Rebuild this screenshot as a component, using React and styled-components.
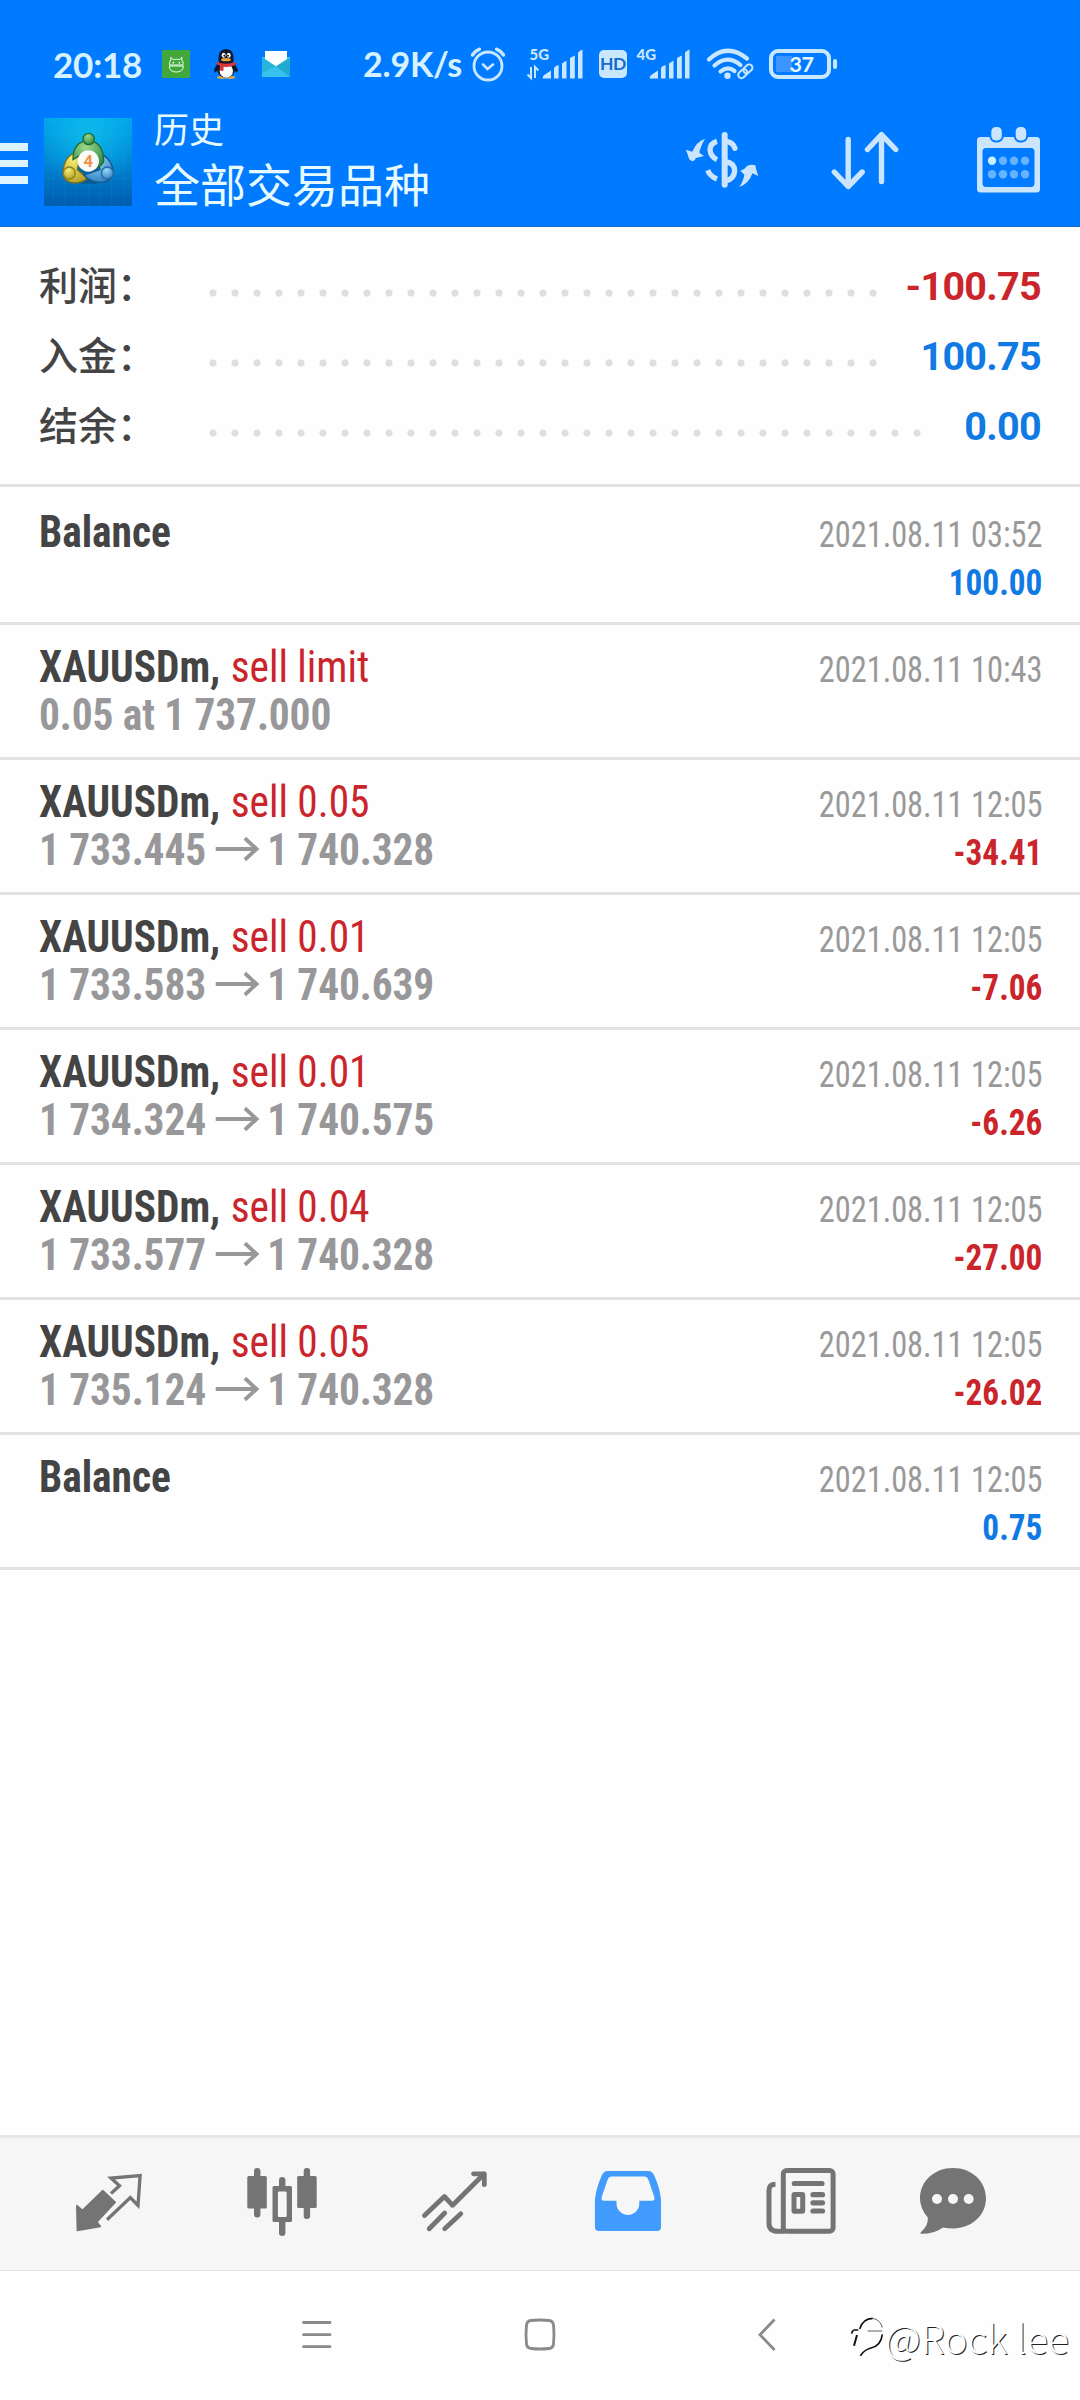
import React from 'react';
import styled, { createGlobalStyle } from 'styled-components';

const GlobalStyle = createGlobalStyle`
  * {
    box-sizing: border-box;
  }

  body {
    margin: 0;
    background: #fff;
    font-family: Roboto, 'Noto Sans CJK SC', sans-serif;
  }

  svg {
    display: block;
    flex: none;
    overflow: visible;
  }
`;

const COLORS = {
  red: '#c9252b',
  blue: '#0f79e4',
  text: '#444',
  gray: '#98989a',
  line: '#e3e3e3',
  icon: '#747474',
  light: '#c9e8ff',
};

const Screen = styled.div`
  position: relative;
  display: flex;
  flex-direction: column;
  width: 1080px;
  height: 2400px;
  overflow: hidden;
  background: #fefefe;
`;

const Header = styled.header`
  height: 227px;
  background: #007aff;
  border-bottom: 1px solid #1569c4;
`;

const StatusBar = styled.div`
  display: flex;
  align-items: center;
  height: 88px;
  padding: 40px 0 0 53px;
  color: #d6f1ff;
`;

const Clock = styled.div`
  width: 109px;
  font: 700 35px/44px Lato, sans-serif;
  letter-spacing: -0.2px;
  white-space: nowrap;
`;

const NotiIcons = styled.div`
  display: flex;
  align-items: center;
  gap: 24px;
  width: 201px;
`;

const Speed = styled.div`
  width: 107px;
  font: 700 34px/44px Lato, sans-serif;
  letter-spacing: -0.2px;
  white-space: nowrap;
`;

const SystemIcons = styled.div`
  display: flex;
  align-items: center;
`;

const SpacedSignal = styled.div`
  margin-left: 20px;
`;

const ShiftedSignal = styled.div`
  margin-right: 15px;
`;

const Toolbar = styled.div`
  display: flex;
  align-items: flex-start;
  height: 138px;
  padding-top: 12px;
`;

const MenuButton = styled.div`
  display: flex;
  flex-direction: column;
  gap: 9px;
  width: 44px;
  padding-top: 43px;
`;

const MenuBar = styled.span`
  width: 28px;
  height: 7.5px;
  background: #dcf4ff;
`;

const AppLogo = styled.div`
  width: 88px;
  padding-top: 18px;
`;

const Titles = styled.div`
  display: flex;
  flex-direction: column;
  flex: 1;
  padding-left: 22px;
  color: #e6faff;
  font-family: 'Noto Sans CJK SC', sans-serif;
  font-weight: 400;
`;

const SubTitle = styled.div`
  font-size: 35px;
  line-height: 56px;
`;

const Title = styled.div`
  font-size: 46px;
  line-height: 52px;
`;

const Actions = styled.div`
  display: flex;
  align-items: flex-start;
  padding: 24px 38px 0 0;
`;

const ActionSlot = styled.div`
  margin-right: ${({ $gap }) => $gap}px;
  padding-top: ${({ $top }) => $top}px;
`;

const Summary = styled.section`
  display: flex;
  flex-direction: column;
  height: 260px;
  padding: 24px 39px 0 39px;
  border-bottom: 3px solid ${COLORS.line};
`;

const SummaryRow = styled.div`
  display: flex;
  align-items: flex-start;
  height: 70px;
`;

const SummaryLabel = styled.div`
  width: 163px;
  font: 500 39px/64px 'Noto Sans CJK SC', sans-serif;
  color: ${COLORS.text};
`;

const Leader = styled.div`
  width: ${({ $dots }) => $dots * 22}px;
  height: 8px;
  margin-top: 38px;
  background: radial-gradient(circle at 11px 4px, #dfdfdf 3.3px, transparent 3.9px) 0 0 / 22px 8px repeat-x;
`;

const SummaryValue = styled.div`
  flex: 1;
  text-align: right;
  font-size: 39.5px;
  line-height: 71px;
  letter-spacing: -0.7px;
  font-weight: 700;
  color: ${({ $negative }) => ($negative ? COLORS.red : COLORS.blue)};
`;

const List = styled.div`
  flex: 1;
`;

const Row = styled.div`
  display: flex;
  justify-content: space-between;
  height: ${({ $first }) => ($first ? 138 : 135)}px;
  padding: ${({ $first }) => ($first ? 21 : 18)}px 38px 0 39px;
  border-bottom: 3px solid ${COLORS.line};
  font-family: 'Roboto Condensed', Roboto, sans-serif;
`;

const Deal = styled.div`
  font-size: 44px;
  line-height: 48px;
  font-weight: 700;
  white-space: pre;
  transform: scaleX(0.94);
  transform-origin: left;
`;

const Symbol = styled.div`
  color: ${COLORS.text};
`;

const Action = styled.span`
  margin-left: 1px;
  color: ${COLORS.red};
  font-weight: 400;
`;

const Prices = styled.div`
  display: flex;
  align-items: center;
  color: ${COLORS.gray};
  letter-spacing: -0.1px;
`;

const SpacedArrow = styled.span`
  display: flex;
  margin: -3px 9px 0 10px;
`;

const Result = styled.div`
  padding-top: 3px;
  font-size: 36.5px;
  line-height: 48px;
  text-align: right;
`;

const Time = styled.div`
  color: #999;
  transform: scaleX(0.886);
  transform-origin: right;
`;

const Amount = styled.div`
  font-weight: 700;
  color: ${({ $negative }) => ($negative ? COLORS.red : COLORS.blue)};
  transform: scaleX(0.91);
  transform-origin: right;
`;

const TabBar = styled.nav`
  display: flex;
  height: 136px;
  padding-left: 22px;
  background: #f6f6f6;
  border-top: 3px solid #e6e6e6;
  border-bottom: 1px solid #e0e0e0;
`;

const Tab = styled.div`
  display: flex;
  justify-content: center;
  width: ${({ $last }) => ($last ? 131 : 173)}px;
  padding-top: 24px;
  color: ${({ $active }) => ($active ? '#429bff' : COLORS.icon)};
`;

const NavBar = styled.div`
  display: flex;
  align-items: flex-start;
  justify-content: center;
  gap: 193px;
  height: 129px;
  padding-top: 46px;
  color: #8a8a8a;
`;

const Watermark = styled.div`
  position: absolute;
  right: 11px;
  bottom: 36px;
  display: flex;
  align-items: center;
  color: #fff;
  font: 300 39.3px/54px 'Noto Sans CJK SC', sans-serif;
  text-shadow: 1px 1px 0 #222;
  white-space: pre;
`;

/* ---------- 状态栏图标 ---------- */

const AndroidIcon = () => (
  <svg width="28" height="28" viewBox="0 0 84 84">
    <rect width="84" height="84" rx="4" fill="#43a83c" />
    <g fill="none" stroke="#e8ffe8" strokeWidth="3">
      <path d="M23 45 Q21 34 27 30 L26 22 L34 29 Q43 26 52 29 L60 22 L59 30 Q65 34 63 45Z" />
      <path d="M22 48 H64 Q64 66 43 66 Q22 66 22 48Z" />
    </g>
    <circle cx="34" cy="38" r="2.5" fill="#fff" />
    <circle cx="52" cy="38" r="2.5" fill="#fff" />
  </svg>
);

const PenguinIcon = () => (
  <svg width="24" height="30" viewBox="0 0 72 90">
    <ellipse cx="24" cy="85" rx="15" ry="5" fill="#d8a84a" />
    <ellipse cx="49" cy="85" rx="15" ry="5" fill="#d8a84a" />
    <path d="M12 40 L0 62 L3 71 L14 62Z M60 40 L72 62 L69 71 L58 62Z" fill="#10182a" />
    <ellipse cx="36" cy="58" rx="27" ry="29" fill="#10182a" />
    <path d="M13 34 Q12 0 36 0 Q60 0 59 34 Q59 45 36 45 Q13 45 13 34Z" fill="#10182a" />
    <ellipse cx="37" cy="66" rx="20" ry="20" fill="#fff" />
    <ellipse cx="29" cy="19" rx="6" ry="8" fill="#fff" />
    <ellipse cx="44" cy="19" rx="6" ry="8" fill="#fff" />
    <circle cx="31" cy="20" r="3" fill="#111" />
    <circle cx="42" cy="20" r="3" fill="#111" />
    <ellipse cx="36" cy="32" rx="15" ry="5" fill="#e8a33a" />
    <path d="M8 38 Q36 50 64 38 L65 48 Q45 56 29 53 L28 67 L17 64 L18 50 L8 46Z" fill="#d8363c" />
  </svg>
);

const MailIcon = () => (
  <svg width="28" height="27" viewBox="0 0 84 81">
    <path d="M0 18 H84 V78 H0Z" fill="#35c3ee" />
    <path d="M84 22 L42 46 L84 78Z" fill="#21a9cf" />
    <path d="M0 18 L42 46 L0 66Z" fill="#27b4dc" />
    <path d="M9 0 H75 V24 L42 46 L9 24Z" fill="#fff" />
  </svg>
);

const AlarmIcon = () => (
  <svg width="36" height="36" viewBox="0 0 36 36" fill="none" stroke={COLORS.light} strokeLinecap="round">
    <circle cx="18" cy="20" r="14" strokeWidth="2.8" />
    <path d="M13 18.5 L17.5 23 L23 18.5" strokeWidth="2.6" />
    <path d="M2.5 9 Q5 5 9.5 3.2 M33.5 9 Q31 5 26.5 3.2" strokeWidth="3.4" />
  </svg>
);

const NetLabel = styled.text`
  font: 900 15px Lato, sans-serif;
  fill: ${COLORS.light};
`;

const SignalIcon = ({ label, data }) => (
  <svg width="58" height="40" viewBox="0 -3 58 40" fill={COLORS.light}>
    <NetLabel x="3.5" y="12.5">
      {label}
    </NetLabel>
    {data && (
      <path
        d="M5 20 V31 L1.5 27.5 M9 31 V20 L12.5 23.5"
        fill="none"
        stroke={COLORS.light}
        strokeWidth="2"
      />
    )}
    <path d="M17 31.5 Q16 29.5 19 27.5 L25 23.5 V31.5Z" />
    <path d="M28 31.5 V21.5 Q28 20 30 19 L32.6 18 V31.5Z" />
    <path d="M36 31.5 V16.5 L40.5 13.5 V31.5Z" />
    <path d="M44 31.5 V11 L48.8 8.5 V31.5Z" />
    <path d="M52 31.5 V6 Q52 4.5 56.5 2.5 V31.5Z" />
  </svg>
);

const HdBadge = styled.div`
  width: 28px;
  height: 28px;
  margin: 0 6px 0 15px;
  border-radius: 5px;
  background: ${COLORS.light};
  color: #1769cc;
  font: 700 17.5px/28px Lato, sans-serif;
  letter-spacing: -0.5px;
  text-align: center;
`;

const WifiIcon = () => (
  <svg width="48" height="34" viewBox="0 0 48 34" fill="none" stroke={COLORS.light}>
    <g strokeWidth="4.2" strokeLinecap="round">
      <path d="M3 12.5 Q21 -4.5 41 11.5" />
      <path d="M8.5 18.5 Q21.5 7 34.5 18" />
      <path d="M14.5 24.5 Q21.5 18.5 28.5 24" />
    </g>
    <circle cx="21.5" cy="28.7" r="3.2" fill={COLORS.light} stroke="none" />
    <g strokeWidth="2" transform="rotate(-43 39.5 24.5)">
      <rect x="31" y="21" width="10" height="6.5" rx="3.2" />
      <rect x="38" y="21" width="10" height="6.5" rx="3.2" />
    </g>
  </svg>
);

const Battery = styled.div`
  display: flex;
  align-items: center;
  margin-left: 15px;
`;

const BatteryBody = styled.div`
  width: 62px;
  height: 30px;
  border: 4px solid ${COLORS.light};
  border-radius: 9px;
  background: linear-gradient(#3b94ff, #3b94ff) 3px 3px / 16px 16px no-repeat;
  color: #e6f6ff;
  font: 700 21.5px/22px Lato, sans-serif;
  letter-spacing: -0.5px;
  padding-left: 3px;
  text-align: center;
`;

const BatteryTip = styled.div`
  width: 4px;
  height: 10px;
  margin-left: 2px;
  border-radius: 2px;
  background: ${COLORS.light};
`;

/* ---------- 标题栏图标 ---------- */

const LogoDigit = styled.text`
  font: 700 50px Roboto, sans-serif;
  fill: #f0924c;
  text-anchor: middle;
`;

const LogoIcon = () => (
  <svg width="88" height="88" viewBox="12 233 264 264">
    <defs>
      <linearGradient id="tile" x1="0" y1="0" x2="0" y2="1">
        <stop offset="0" stopColor="#00a4ea" />
        <stop offset="0.55" stopColor="#0080cf" />
        <stop offset="1" stopColor="#005cae" />
      </linearGradient>
      <radialGradient id="glow" cx="0.5" cy="0.2" r="0.6">
        <stop offset="0" stopColor="#12c8ee" stopOpacity="0.7" />
        <stop offset="1" stopColor="#12c8ee" stopOpacity="0" />
      </radialGradient>
      <radialGradient id="green" cx="0.4" cy="0.25" r="0.9">
        <stop offset="0" stopColor="#9bd888" />
        <stop offset="1" stopColor="#1f8040" />
      </radialGradient>
      <radialGradient id="yellow" cx="0.4" cy="0.25" r="0.9">
        <stop offset="0" stopColor="#f5ee76" />
        <stop offset="1" stopColor="#b09618" />
      </radialGradient>
      <radialGradient id="sky" cx="0.4" cy="0.25" r="0.9">
        <stop offset="0" stopColor="#9ad9f8" />
        <stop offset="1" stopColor="#1f74ba" />
      </radialGradient>
    </defs>
    <rect x="12" y="233" width="264" height="264" fill="url(#tile)" />
    <rect x="12" y="233" width="264" height="264" fill="url(#glow)" />
    <path
      d="M40 233V497 M75 233V497 M110 233V497 M145 233V497 M180 233V497 M215 233V497 M250 233V497 M12 280H276 M12 325H276 M12 370H276 M12 415H276 M12 460H276"
      stroke="#4fc3f0"
      strokeOpacity="0.14"
      strokeWidth="2"
    />
    <path d="M70 412 L145 290 L218 412 Q145 450 70 412Z" fill="#0a3f6b" fillOpacity="0.5" />
    <g strokeWidth="4">
      <path d="M124 333 Q72 338 69 396 Q70 428 108 428 Q128 427 142 414 L112 388Z" fill="url(#yellow)" stroke="#77711c" />
      <path d="M164 335 Q216 345 220 398 Q212 428 178 426 Q148 424 132 404 L180 388Z" fill="url(#sky)" stroke="#17598c" />
      <path d="M99 358 Q98 305 145 300 Q192 305 191 365 L176 382 L145 332 L120 345Z" fill="url(#green)" stroke="#1d6a32" />
      <circle cx="88" cy="398" r="18" fill="url(#yellow)" stroke="#8d8322" />
      <circle cx="202" cy="398" r="18" fill="url(#sky)" stroke="#1f6ba6" />
      <circle cx="146" cy="296" r="17" fill="url(#green)" stroke="#1b6b34" />
    </g>
    <circle cx="145" cy="362" r="32" fill="#fbfbf8" />
    <LogoDigit x="145" y="380">
      4
    </LogoDigit>
  </svg>
);

const CurrencyIcon = () => (
  <svg width="75" height="62" viewBox="555 265 225 186" fill="#cbe5ff">
    <path d="M615 294 Q601 318 598 336 L612 346 L588 352 Q582 364 576 361 Q566 359 564 344 Q561 334 557 327 L577 333 Q588 304 615 294Z" />
    <path d="M718 439 Q731 418 733 402 L721 390 Q735 386 741 376 Q754 370 766 374 Q768 388 775 406 L757 398 Q748 428 718 439Z" />
    <g fill="none" stroke="#cbe5ff" strokeWidth="16">
      <path d="M674 283 V432" strokeLinecap="round" strokeWidth="18" />
      <path d="M651 302 Q630 308 630 328 Q632 348 651 357" />
      <path d="M680 303 Q699 305 705 323" strokeLinecap="round" />
      <path d="M623 389 Q631 408 651 415" />
      <path d="M678 363 Q704 368 704 391 Q702 414 678 421" />
    </g>
  </svg>
);

const SortIcon = () => (
  <svg
    width="70"
    height="62"
    viewBox="830 128 70 62"
    fill="none"
    stroke="#cbe5ff"
    strokeWidth="5.4"
    strokeLinecap="round"
    strokeLinejoin="round"
  >
    <path d="M848.2 139.5 V186 M834.3 172 L848.2 186.5 L862.2 172" />
    <path d="M881.5 181.5 V135 M867.5 149.5 L881.5 134.5 L895.7 149.5" />
  </svg>
);

const CalendarIcon = () => (
  <svg width="66" height="70" viewBox="976 125 66 70">
    <path
      d="M980.5 137 H1036.5 Q1040 137 1040 140.5 V189 Q1040 192.5 1036.5 192.5 H980.5 Q977 192.5 977 189 V140.5 Q977 137 980.5 137Z M986 148 Q982.5 148 982.5 151.5 V183 Q982.5 187 986 187 H1031 Q1034.5 187 1034.5 183 V151.5 Q1034.5 148 1031 148Z"
      fillRule="evenodd"
      fill="#cbe5ff"
    />
    {[990.3, 1014.7].map((x) => (
      <rect key={x} x={x} y="126" width="12.5" height="15.5" rx="5.5" fill="#cbe5ff" stroke="#007aff" strokeWidth="2" />
    ))}
    {[160.7, 174.3].map((y) =>
      [992, 1003, 1014, 1025].map((x) => (
        <circle key={`${x}-${y}`} cx={x} cy={y} r="4.2" fill={x === 992 && y === 160.7 ? '#c8f0ff' : '#66b3ff'} />
      ))
    )}
  </svg>
);

/* ---------- 底部标签图标 ---------- */

const QuotesIcon = () => (
  <svg width="76" height="80" viewBox="70.5 42 76 80">
    <path
      d="M76.3 85.5 L82 90.4 L102.3 70.5 L114.8 82.3 L96.4 102 L100 106.4 L76.8 110.5Z"
      fill="currentColor"
      stroke="currentColor"
      strokeWidth="1.5"
      strokeLinejoin="round"
    />
    <path
      d="M110.5 73.5 L119 65.7 L110.5 58 L139.6 55.5 L137.5 85.5 L129.8 77.5 L106.5 99.8"
      fill="none"
      stroke="currentColor"
      strokeWidth="3.3"
    />
  </svg>
);

const ChartIcon = () => (
  <svg width="76" height="80" viewBox="243 42 76 80" fill="currentColor">
    <rect x="246.3" y="56" width="19.5" height="32.5" rx="1.5" />
    <rect x="253" y="48" width="6.4" height="49.5" rx="3" />
    <path
      d="M273 66 H289.5 Q291 66 291 67.5 V100.5 Q291 102 289.5 102 H273 Q271.5 102 271.5 100.5 V67.5 Q271.5 66 273 66Z M278 71.5 Q276.9 71.5 276.9 73 V95.5 Q276.9 97 278 97 H284.5 Q285.7 97 285.7 95.5 V73 Q285.7 71.5 284.5 71.5Z"
      fillRule="evenodd"
    />
    <path d="M278 66 V60 Q278 57 281.2 57 Q284.4 57 284.4 60 V66Z M278 102 V113 Q278 116 281.2 116 Q284.4 116 284.4 113 V102Z" />
    <rect x="296.2" y="56" width="19.5" height="32" rx="1.5" />
    <rect x="302.7" y="48" width="6.4" height="51" rx="3" />
  </svg>
);

const TradeIcon = () => (
  <svg
    width="76"
    height="80"
    viewBox="416.5 42 76 80"
    fill="none"
    stroke="currentColor"
    strokeWidth="4.8"
    strokeLinecap="round"
    strokeLinejoin="round"
  >
    <path d="M424 95.5 L443.9 76.5 L452.1 85.3 L483.5 54" />
    <path d="M473 53.8 H483.8 V64.7" />
    <path d="M444.2 93 L428.7 108.7 M460.3 93.8 L444.2 108.7" />
  </svg>
);

const HistoryIcon = () => (
  <svg width="76" height="80" viewBox="49.5 42 76 80" fill="currentColor">
    <path
      fillRule="evenodd"
      d="M67 51 H108 Q111.5 51 113.5 55 Q119.5 68 120.5 80 V107 Q120.5 111 116.5 111 H58.4 Q54.4 111 54.4 107 V80 Q55.5 68 61.5 55 Q63.5 51 67 51Z M71 56.5 Q68.2 56.5 67 60 L61.2 77 Q60.2 80.7 63.5 80.7 H76 V83.5 A11.4 11.4 0 0 0 98.8 83.5 V80.7 H111.5 Q114.8 80.7 113.8 77 L108 60 Q106.8 56.5 104 56.5Z"
    />
  </svg>
);

const NewsIcon = () => (
  <svg width="76" height="80" viewBox="223 42 76 80" fill="none" stroke="currentColor" strokeWidth="5">
    <rect x="243.3" y="50.5" width="49.8" height="60.8" rx="3.5" />
    <path d="M235.5 64.3 Q229 64.5 229 70 V103 Q229 111.3 237.5 111.3 H245" />
    <path
      d="M254.3 63.5 H282 M273 74.7 H282.5 M273 82.8 H282.5 M273 91 H282.5"
      strokeLinecap="round"
      strokeWidth="5.2"
    />
    <rect x="254" y="74.5" width="8.7" height="16.8" rx="0.5" />
  </svg>
);

const MessagesIcon = () => (
  <svg width="76" height="80" viewBox="375 42 76 80">
    <path
      d="M413 48 C432 48 446 61.5 446 78.3 C446 95 432 108.5 413 108.5 Q407.5 108.5 403 107.4 Q394 114 381 113.8 Q379.5 113.5 381.5 111.5 Q388.5 105.5 387.8 97.5 Q380 89 380 78.3 C380 61.5 394 48 413 48Z"
      fill="currentColor"
    />
    {[397, 413, 428.7].map((x) => (
      <circle key={x} cx={x} cy="79" r="5" fill="#f6f6f6" />
    ))}
  </svg>
);

const WatermarkLogo = () => (
  <svg width="34" height="44" viewBox="0 0 102 132" fill="none" stroke="#111" strokeWidth="4">
    <path d="M2 56 Q4 46 10 45 H22" strokeWidth="5" />
    <path d="M26 42 Q36 10 65 10" strokeWidth="5" />
    <path d="M65 10 Q88 14 94 38 M50 48 H94" strokeWidth="2" />
    <path d="M18 60 L9 92" strokeWidth="6" />
    <path d="M94 58 Q90 92 60 99 Q40 104 28 122" strokeWidth="5" />
  </svg>
);

const ArrowIcon = () => (
  <svg width="46" height="26" viewBox="0 0 43 24" fill="none" stroke={COLORS.gray} strokeWidth="3.8">
    <path d="M0 12 H41 M29 2 L40.5 12 L29 22" />
  </svg>
);

/* ---------- 数据 ---------- */

const summary = [
  { label: '利润：', value: '-100.75', dots: 31 },
  { label: '入金：', value: '100.75', dots: 31 },
  { label: '结余：', value: '0.00', dots: 33 },
];

const deals = [
  { symbol: 'Balance', time: '2021.08.11 03:52', amount: '100.00' },
  { symbol: 'XAUUSDm,', action: 'sell limit', pending: '0.05 at 1 737.000', time: '2021.08.11 10:43' },
  { symbol: 'XAUUSDm,', action: 'sell 0.05', open: '1 733.445', close: '1 740.328', time: '2021.08.11 12:05', amount: '-34.41' },
  { symbol: 'XAUUSDm,', action: 'sell 0.01', open: '1 733.583', close: '1 740.639', time: '2021.08.11 12:05', amount: '-7.06' },
  { symbol: 'XAUUSDm,', action: 'sell 0.01', open: '1 734.324', close: '1 740.575', time: '2021.08.11 12:05', amount: '-6.26' },
  { symbol: 'XAUUSDm,', action: 'sell 0.04', open: '1 733.577', close: '1 740.328', time: '2021.08.11 12:05', amount: '-27.00' },
  { symbol: 'XAUUSDm,', action: 'sell 0.05', open: '1 735.124', close: '1 740.328', time: '2021.08.11 12:05', amount: '-26.02' },
  { symbol: 'Balance', time: '2021.08.11 12:05', amount: '0.75' },
];

const tabs = [QuotesIcon, ChartIcon, TradeIcon, HistoryIcon, NewsIcon, MessagesIcon];

const isNegative = (value) => value.startsWith('-');

const DealRow = ({ deal, first }) => (
  <Row $first={first}>
    <Deal>
      <Symbol>
        {deal.symbol}
        {deal.action && <Action> {deal.action}</Action>}
      </Symbol>
      {deal.pending && <Prices>{deal.pending}</Prices>}
      {deal.open && (
        <Prices>
          {deal.open}
          <SpacedArrow>
            <ArrowIcon />
          </SpacedArrow>
          {deal.close}
        </Prices>
      )}
    </Deal>
    <Result>
      <Time>{deal.time}</Time>
      {deal.amount && <Amount $negative={isNegative(deal.amount)}>{deal.amount}</Amount>}
    </Result>
  </Row>
);

const App = () => {
  return (
    <Screen>
      <GlobalStyle />
      <Header>
        <StatusBar>
          <Clock>20:18</Clock>
          <NotiIcons>
            <AndroidIcon />
            <PenguinIcon />
            <MailIcon />
          </NotiIcons>
          <Speed>2.9K/s</Speed>
          <SystemIcons>
            <AlarmIcon />
            <SpacedSignal>
              <SignalIcon label="5G" data />
            </SpacedSignal>
            <HdBadge>HD</HdBadge>
            <ShiftedSignal>
              <SignalIcon label="4G" />
            </ShiftedSignal>
            <WifiIcon />
            <Battery>
              <BatteryBody>37</BatteryBody>
              <BatteryTip />
            </Battery>
          </SystemIcons>
        </StatusBar>
        <Toolbar>
          <MenuButton>
            <MenuBar />
            <MenuBar />
            <MenuBar />
          </MenuButton>
          <AppLogo>
            <LogoIcon />
          </AppLogo>
          <Titles>
            <SubTitle>历史</SubTitle>
            <Title>全部交易品种</Title>
          </Titles>
          <Actions>
            <ActionSlot $gap={70} $top={5}>
              <CurrencyIcon />
            </ActionSlot>
            <ActionSlot $gap={76} $top={4}>
              <SortIcon />
            </ActionSlot>
            <ActionSlot $gap={0} $top={1}>
              <CalendarIcon />
            </ActionSlot>
          </Actions>
        </Toolbar>
      </Header>

      <Summary>
        {summary.map((item) => (
          <SummaryRow key={item.label}>
            <SummaryLabel>{item.label}</SummaryLabel>
            <Leader $dots={item.dots} />
            <SummaryValue $negative={isNegative(item.value)}>{item.value}</SummaryValue>
          </SummaryRow>
        ))}
      </Summary>

      <List>
        {deals.map((deal, i) => (
          <DealRow key={i} deal={deal} first={i === 0} />
        ))}
      </List>

      <TabBar>
        {tabs.map((Icon, i) => (
          <Tab key={i} $active={i === 3} $last={i === 5}>
            <Icon />
          </Tab>
        ))}
      </TabBar>

      <NavBar>
        <svg width="32" height="36" viewBox="0 0 32 36" stroke="currentColor" strokeWidth="2.8" strokeLinecap="round">
          <path d="M4.5 5.5 H31 M4.5 17.7 H31 M4.5 29.7 H31" />
        </svg>
        <svg width="32" height="36" viewBox="0 0 32 36" fill="none" stroke="currentColor" strokeWidth="2.8">
          <path d="M7 3.5 Q16 2.5 25 3.5 Q29 4 29.5 8 Q30.5 17.5 29.5 27 Q29 31 25 31.5 Q16 32.5 7 31.5 Q3 31 2.5 27 Q1.5 17.5 2.5 8 Q3 4 7 3.5Z" />
        </svg>
        <svg width="32" height="36" viewBox="0 0 32 36" fill="none" stroke="currentColor" strokeWidth="2.8">
          <path d="M25.5 2.5 L11 17.7 L25.5 33" />
        </svg>
      </NavBar>

      <Watermark>
        <WatermarkLogo />
        @Rock lee
      </Watermark>
    </Screen>
  );
};

export default App;
